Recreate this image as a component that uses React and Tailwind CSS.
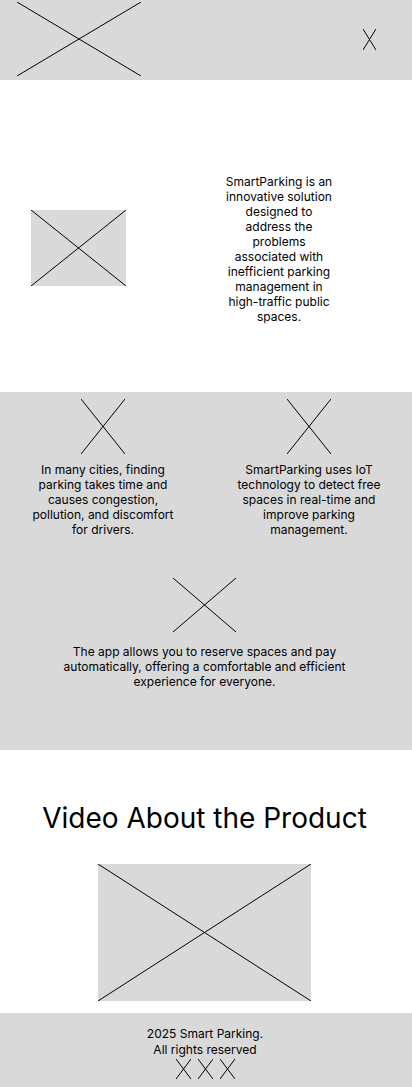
import React from "react";

const Cross = ({ className }) => (
  <svg className={className} viewBox="0 0 100 100" preserveAspectRatio="none">
    <line x1="0" y1="0" x2="100" y2="100" stroke="#000" strokeWidth="1" vectorEffect="non-scaling-stroke" />
    <line x1="100" y1="0" x2="0" y2="100" stroke="#000" strokeWidth="1" vectorEffect="non-scaling-stroke" />
  </svg>
);

const features = [
  "In many cities, finding parking takes time and causes congestion, pollution, and discomfort for drivers.",
  "SmartParking uses IoT technology to detect free spaces in real-time and improve parking management.",
];

export default function App() {
  return (
    <div className="w-[412px] min-h-screen bg-white text-black font-['Inter',sans-serif]">
      {/* Header */}
      <header className="h-[80px] bg-[#d9d9d9] flex items-start justify-between pl-[17px] pr-[36px]">
        <Cross className="w-[124px] h-[74px] mt-[2px]" />
        <Cross className="w-[13px] h-[21px] mt-[29px]" />
      </header>

      {/* Hero */}
      <section className="h-[312px] pt-[26px] flex items-center justify-between pl-[31px] pr-[77px]">
        <div className="w-[95px] h-[76px] bg-[#d9d9d9] -mt-[3px]">
          <Cross className="w-full h-full" />
        </div>
        <p className="w-[112px] text-[12px] leading-[15px] text-center">
          SmartParking is an innovative solution designed to address the problems associated with inefficient parking management in high-traffic public spaces.
        </p>
      </section>

      {/* Features */}
      <section className="h-[358px] bg-[#d9d9d9] pt-[7px]">
        <div className="grid grid-cols-2">
          {features.map((text, i) => (
            <div key={i} className="flex flex-col items-center">
              <Cross className="w-[44px] h-[55px]" />
              <p className="mt-[8px] w-[146px] text-[12px] leading-[15px] text-center">{text}</p>
            </div>
          ))}
        </div>
        <div className="flex flex-col items-center mt-[41px] pr-[3px]">
          <Cross className="w-[63px] h-[54px]" />
          <p className="mt-[12px] w-[290px] text-[12px] leading-[15px] text-center">
            The app allows you to reserve spaces and pay automatically, offering a comfortable and efficient experience for everyone.
          </p>
        </div>
      </section>

      {/* Video */}
      <section className="h-[263px] flex flex-col items-center pt-[51px] pr-[3px]">
        <h2 className="text-[28px] leading-[34px] font-normal">Video About the Product</h2>
        <div className="mt-[29px] w-[213px] h-[137px] bg-[#d9d9d9]">
          <Cross className="w-full h-full" />
        </div>
      </section>

      {/* Footer */}
      <footer className="h-[74px] bg-[#d9d9d9] flex flex-col items-center pt-[13px] pr-[2px]">
        <p className="text-[12px] leading-[16px] text-center">2025 Smart Parking.</p>
        <p className="text-[12px] leading-[16px] text-center">All rights reserved</p>
        <div className="flex gap-[7px] mt-[1px]">
          <Cross className="w-[15px] h-[20px]" />
          <Cross className="w-[15px] h-[20px]" />
          <Cross className="w-[15px] h-[20px]" />
        </div>
      </footer>
    </div>
  );
}
